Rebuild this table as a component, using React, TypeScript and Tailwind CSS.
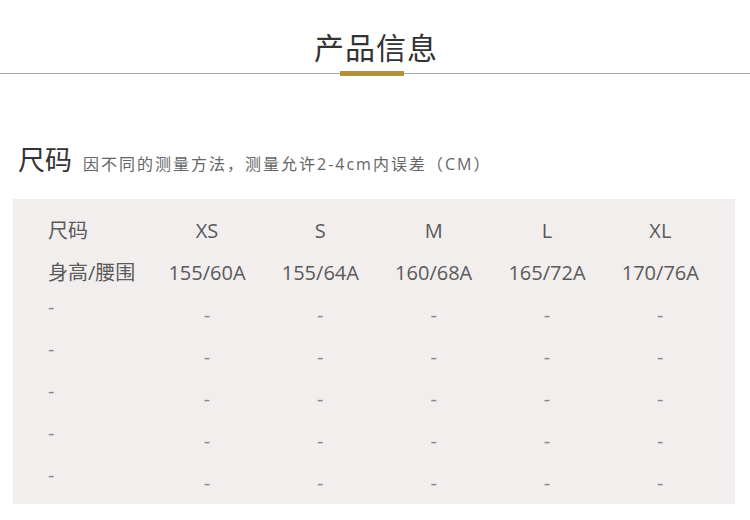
const sizes = ['XS', 'S', 'M', 'L', 'XL'];
const heights = ['155/60A', '155/64A', '160/68A', '165/72A', '170/76A'];

const font = { fontFamily: '"Open Sans", "Noto Sans CJK SC", sans-serif' };

export default function App() {
  const blankRows = [0, 1, 2, 3, 4];

  return (
    <div className="w-[750px] h-[520px] bg-white overflow-hidden" style={font}>
      {/* Section title */}
      <div className="pt-[31px] flex justify-center">
        <h1 className="text-[30px] leading-[34px] text-[#333] pl-[2px] tracking-[1px]">产品信息</h1>
      </div>
      <div className="mt-[6px] flex items-center">
        <div className="w-[340px] h-px bg-[#a8a8a8]"></div>
        <div className="w-[64px] h-[5px] bg-[#b3923b]"></div>
        <div className="flex-1 h-px bg-[#a8a8a8]"></div>
      </div>

      {/* Size heading */}
      <div className="mt-[69px] pl-[18px] flex items-baseline gap-[11px]">
        <h2 className="text-[27px] leading-[30px] text-[#333]">尺码</h2>
        <p className="text-[16px] text-[#666] tracking-[2px]">因不同的测量方法，测量允许2-4cm内误差（CM）</p>
      </div>

      {/* Size table */}
      <div className="mt-[23px] ml-[13px] w-[722px] h-[305px] bg-[#f2eeee] pl-[24px] pr-[18px] pt-[11px] text-[20px] text-[#5a5a5a]">
        <div className="grid grid-cols-6">
          <div className="h-[42px] flex items-center pl-[11px]">尺码</div>
          {sizes.map((s) => (
            <div key={s} className="h-[42px] flex items-center justify-center">{s}</div>
          ))}
          <div className="h-[42px] flex items-center pl-[11px]">身高/腰围</div>
          {heights.map((h) => (
            <div key={h} className="h-[42px] flex items-center justify-center">{h}</div>
          ))}
          {blankRows.map((r) => (
            <>
              <div key={'a' + r} className="h-[42px] flex items-center pl-[11px] pb-4 text-[#888]">-</div>
              {sizes.map((s) => (
                <div key={s + r} className="h-[42px] flex items-center justify-center text-[#888]">-</div>
              ))}
            </>
          ))}
        </div>
      </div>
    </div>
  );
}
